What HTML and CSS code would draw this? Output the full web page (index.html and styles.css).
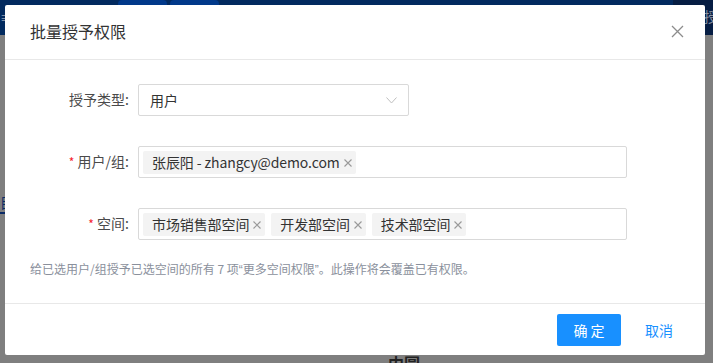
FILE: index.html
```html
<!DOCTYPE html>
<html lang="zh-CN">
  <head>
    <meta charset="UTF-8" />
    <meta name="viewport" content="width=device-width, initial-scale=1.0" />
    <title>批量授予权限</title>
    <link rel="stylesheet" href="styles.css">
  </head>
  <body>
    <header class="topbar">
      <span class="menu">≡</span>
      <span class="tab"></span>
      <span class="tab"></span>
      <span class="spacer"></span>
      <span class="user">授</span>
    </header>
    <main class="page">
      <p class="crumb">目</p>
      <p class="bottomText">内圆</p>
    </main>

    <div class="mask">
      <section class="modal">
        <div class="modalHeader">
          <h1>批量授予权限</h1>
          <button class="close" aria-label="关闭">
            <svg width="13" height="13" viewBox="0 0 13 13">
              <path d="M1 1 L12 12 M12 1 L1 12" stroke="#8c8c8c" stroke-width="1.3" fill="none" />
            </svg>
          </button>
        </div>

        <div class="modalBody">
          <div class="formRow">
            <label class="formLabel">授予类型:</label>
            <div class="field select">
              <span>用户</span>
              <svg class="arrow" width="11" height="7" viewBox="0 0 11 7">
                <path d="M0.5 0.5 L5.5 6 L10.5 0.5" stroke="#bfbfbf" stroke-width="1" fill="none" />
              </svg>
            </div>
          </div>

          <div class="formRow">
            <label class="formLabel"><i class="req">*</i> 用户/组:</label>
            <div class="field tags wide">
              <span class="tag">张辰阳 - zhangcy@demo.com<svg class="x" width="8" height="8" viewBox="0 0 8 8"><path d="M0.5 0.5 L7.5 7.5 M7.5 0.5 L0.5 7.5" /></svg></span>
            </div>
          </div>

          <div class="formRow">
            <label class="formLabel"><i class="req">*</i> 空间:</label>
            <div class="field tags wide">
              <span class="tag">市场销售部空间<svg class="x" width="8" height="8" viewBox="0 0 8 8"><path d="M0.5 0.5 L7.5 7.5 M7.5 0.5 L0.5 7.5" /></svg></span>
              <span class="tag">开发部空间<svg class="x" width="8" height="8" viewBox="0 0 8 8"><path d="M0.5 0.5 L7.5 7.5 M7.5 0.5 L0.5 7.5" /></svg></span>
              <span class="tag">技术部空间<svg class="x" width="8" height="8" viewBox="0 0 8 8"><path d="M0.5 0.5 L7.5 7.5 M7.5 0.5 L0.5 7.5" /></svg></span>
            </div>
          </div>

          <p class="hint">给已选用户/组授予已选空间的所有 7 项<span class="q">“</span>更多空间权限<span class="q">”</span>。此操作将会覆盖已有权限。</p>
        </div>

        <div class="modalFooter">
          <button class="btn primary">确 定</button>
          <button class="btn link">取消</button>
        </div>
      </section>
    </div>
  </body>
</html>
```

FILE: styles.css
```css
* {
  box-sizing: border-box;
}

body {
  margin: 0;
  font-family: "Noto Sans CJK SC", "Noto Sans", sans-serif;
  background: #7f7f7f;
  height: 363px;
  overflow: hidden;
}

/* page under the mask */
.topbar {
  height: 35px;
  background: #022a5f;
  display: flex;
  align-items: flex-start;
}
.menu {
  color: #9aa4b5;
  font-size: 12px;
  line-height: 35px;
  width: 118px;
}
.tab {
  width: 49px;
  height: 35px;
  margin-right: 3px;
  background: #01398a;
  border-radius: 4px 4px 0 0;
}
.spacer {
  flex: 1;
}
.user {
  width: 40px;
  height: 35px;
  background: #061d43;
  color: #8a93a3;
  font-size: 14px;
  padding: 6px 0 0 31px;
  overflow: hidden;
}

.page {
  position: relative;
  height: 328px;
}
.crumb {
  margin: 0;
  padding-top: 157px;
  font-size: 14px;
  color: #0a2a66;
  width: 12px;
  border-bottom: 2px solid #0a2a66;
}
.bottomText {
  margin: 0;
  position: absolute;
  left: 388px;
  top: 316px;
  font-size: 16px;
  font-weight: bold;
  color: #222;
}

/* modal */
.mask {
  position: absolute;
  top: 0;
  left: 0;
  right: 0;
  bottom: 0;
  padding: 5px 8px 0 5px;
}
.modal {
  width: 700px;
  height: 350px;
  background: #fff;
  border-radius: 2px;
  display: flex;
  flex-direction: column;
}

.modalHeader {
  height: 55px;
  border-bottom: 1px solid #e8e8e8;
  display: flex;
  align-items: center;
  padding: 0 21px 2px 25px;
}
.modalHeader h1 {
  flex: 1;
  margin: 0;
  font-size: 16px;
  font-weight: normal;
  color: #333;
}
.close {
  border: none;
  background: none;
  padding: 0;
  display: flex;
  cursor: pointer;
}

.modalBody {
  flex: 1;
  padding: 24px 25px 0 25px;
}
.formRow {
  display: flex;
  align-items: flex-start;
  margin-bottom: 30px;
}
.formRow:nth-child(3) {
  margin-bottom: 19px;
}
.formLabel {
  width: 100px;
  text-align: right;
  font-size: 14px;
  line-height: 30px;
  color: #4a4a4a;
  padding-right: 1px;
  margin-right: 8px;
}
.req {
  font-style: normal;
  color: #f5222d;
  font-size: 12px;
}

.field {
  height: 32px;
  border: 1px solid #d9d9d9;
  border-radius: 2px;
  font-size: 14px;
  color: #333;
}
.select {
  width: 271px;
  display: flex;
  align-items: center;
  justify-content: space-between;
  padding: 0 11px 0 11px;
}
.wide {
  width: 489px;
}
.tags {
  display: flex;
  align-items: center;
  gap: 6px;
  padding: 0 4px;
}
.tag {
  height: 23px;
  line-height: 22px;
  background: #f3f3f3;
  border-radius: 2px;
  padding: 0 4px 0 9px;
  color: #333;
  white-space: nowrap;
  display: flex;
  align-items: center;
  letter-spacing: -0.1px;
}
.x {
  stroke: #999;
  stroke-width: 1.1;
  fill: none;
  margin: 2px 0 0 4px;
}

.hint {
  margin: 0;
  font-size: 12px;
  line-height: 20px;
  color: #8a909c;
}
.q {
  font-family: "Liberation Sans", sans-serif;
}

.modalFooter {
  height: 52px;
  border-top: 1px solid #e8e8e8;
  display: flex;
  justify-content: flex-end;
  align-items: flex-start;
  padding: 10px 14px 0 0;
  gap: 6px;
}
.btn {
  width: 64px;
  height: 32px;
  font-family: inherit;
  font-size: 14px;
  border: none;
  border-radius: 2px;
  cursor: pointer;
}
.primary {
  background: #1890ff;
  color: #fff;
}
.link {
  background: none;
  color: #1890ff;
}
```
